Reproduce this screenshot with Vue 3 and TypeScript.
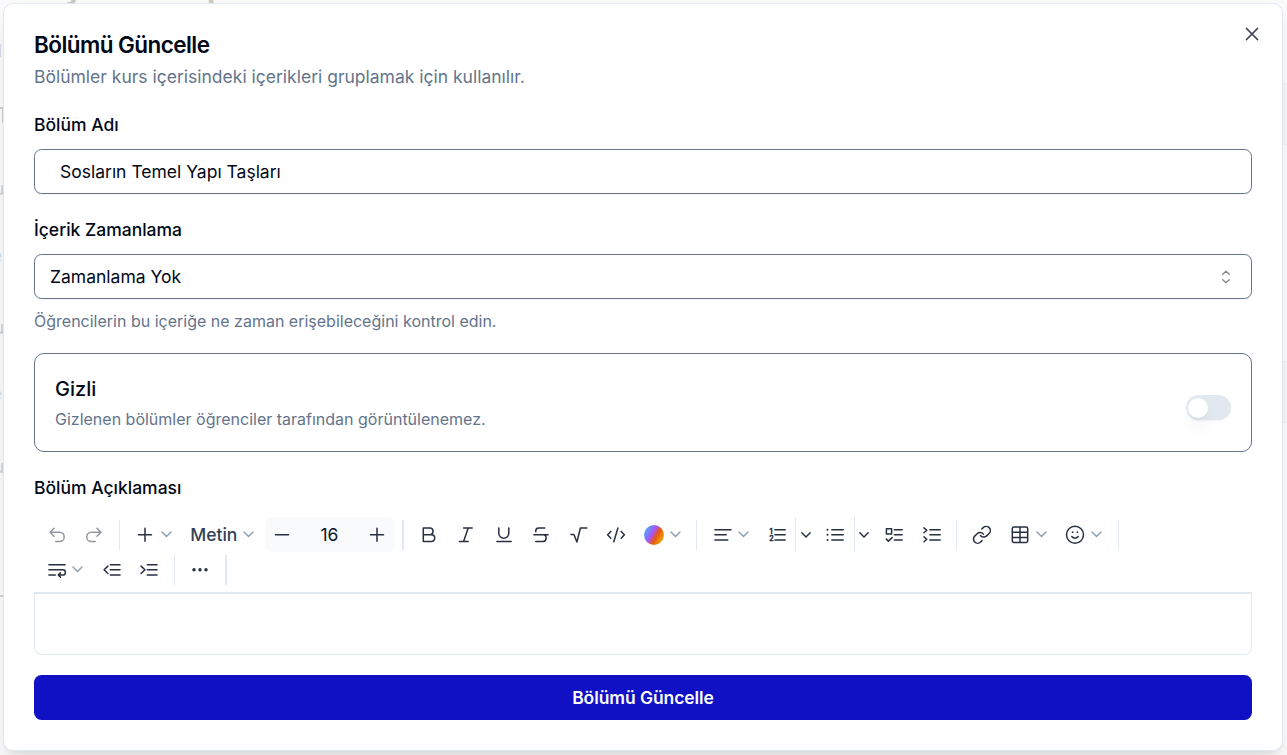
<script setup lang="ts">
import { ref } from 'vue'

type Kind = 'btn' | 'menu' | 'sep' | 'text' | 'size' | 'split' | 'color'
interface Item { kind: Kind; paths?: string; dim?: boolean; thick?: boolean; label?: string; art?: string }

const name = ref('Sosların Temel Yapı Taşları')
const hidden = ref(false)
const lines = 'M7.9 4.7H18.2M7.9 9.8H18.2M7.9 15H18.2'

const rowOne: Item[] = [
  { kind: 'btn', dim: true, paths: 'M7 3.3L3.1 7.3L7 11.3M3.3 7.3H12.6A4.6 4.6 0 0 1 12.6 16.5H8.8' },
  { kind: 'btn', dim: true, paths: 'M13 3.3L16.9 7.3L13 11.3M16.7 7.3H7.4A4.6 4.6 0 0 0 7.4 16.5H11.2' },
  { kind: 'sep' },
  { kind: 'menu', paths: 'M3.5 9.8H16.5M10 3.3V16.3' },
  { kind: 'text', label: 'Metin' },
  { kind: 'size' },
  { kind: 'sep', thick: true },
  { kind: 'btn', paths: 'M4.3 3H11.4A3.2 3.4 0 0 1 11.4 9.7H4.3ZM4.3 9.7H12.4A3.3 3.4 0 0 1 12.4 16.5H4.3Z' },
  { kind: 'btn', paths: 'M7.6 3H16.2M3.4 16.5H12.2M12.2 3L7.6 16.5' },
  { kind: 'btn', paths: 'M4.8 3V8.2A5 5 0 0 0 14.8 8.2V3M2.9 16.5H17.2' },
  { kind: 'btn', paths: 'M13.8 3H7.8Q4.8 3 4.8 5.6V6.8M2.9 9.8H17.1M12.6 9.8Q15 10.2 15 12.2V13.6Q15 16.5 12 16.5H4.8' },
  { kind: 'btn', paths: 'M2 9.5H4.9L7.9 17L11.4 3H17.8' },
  { kind: 'btn', paths: 'M4.8 6.4L1.6 9.8L4.8 13.2M15.2 6.4L18.4 9.8L15.2 13.2M11.9 3L7.8 16.7' },
  { kind: 'color' },
  { kind: 'sep' },
  { kind: 'menu', paths: 'M1.9 4.7H18M1.9 9.8H13.2M1.9 15H14.8' },
  { kind: 'split', art: 'ol', paths: lines },
  { kind: 'split', art: 'ul', paths: 'M6.8 4.7H18.2M6.8 9.8H18.2M6.8 15H18.2' },
  { kind: 'btn', paths: 'M2.4 3.7H7.6V8.9H2.4ZM2.3 14.1L4.4 16.1L8.1 12.6M10.3 4.7H18.2M10.3 9.8H18.2M10.3 15H18.2' },
  { kind: 'btn', paths: lines + 'M2 2.9L4.8 5.3L2 7.7M2 11.9L4.8 14.3L2 16.7' },
  { kind: 'sep' },
  { kind: 'btn', paths: 'M8.4 10.5A4.2 4.2 0 0 0 14.6 10.9L17.1 8.5A4.1 4.1 0 0 0 11.2 2.6L9.8 4M11.4 9.1A4.2 4.2 0 0 0 5.2 8.7L2.7 11.1A4.1 4.1 0 0 0 8.6 17L10 15.6' },
  { kind: 'menu', paths: 'M4 2.1H16Q17.7 2.1 17.7 3.8V15.8Q17.7 17.5 16 17.5H4Q2.3 17.5 2.3 15.8V3.8Q2.3 2.1 4 2.1ZM10 2.1V17.5M2.3 7.2H17.7M2.3 12.4H17.7' },
  { kind: 'menu', art: 'smile', paths: 'M6.8 11.6Q10 15 13.2 11.6' },
  { kind: 'sep' },
]

const rowTwo: Item[] = [
  { kind: 'menu', paths: 'M1.9 4.7H18.1M1.9 9.8H15.8A2.6 2.6 0 0 1 15.8 15H11.7M13.4 12.9L11.3 15L13.4 17.1M1.9 15H8.3' },
  { kind: 'btn', paths: 'M5.9 6.1L2.1 9.8L5.9 13.5M8.3 4.7H18M8.3 9.8H18M8.3 15H18' },
  { kind: 'btn', paths: 'M2.1 6.1L5.9 9.8L2.1 13.5M8.3 4.7H18M8.3 9.8H18M8.3 15H18' },
  { kind: 'sep' },
  { kind: 'btn', art: 'dots' },
  { kind: 'sep', thick: true },
]
const rows = [rowOne, rowTwo]
</script>

<template>
  <div class="page">
    <div class="behind">
      <span class="scrap top y">y</span>
      <span class="scrap top p">p</span>
      <i class="bit b1"></i><i class="bit b2"></i>
      <span class="scrap u1">u</span><span class="scrap u2">u</span><span class="scrap u3">u</span>
      <span class="scrap e1">e</span><span class="scrap e2">e</span>
      <i class="bit b3"></i>
      <i class="band r1"></i><i class="band r2"></i>
    </div>
    <section class="dialog">
      <svg class="close" viewBox="0 0 20 20"><path d="M4.4 4.4L15.6 15.6M15.6 4.4L4.4 15.6" /></svg>
      <h2>Bölümü Güncelle</h2>
      <p class="desc">Bölümler kurs içerisindeki içerikleri gruplamak için kullanılır.</p>

      <label class="label first">Bölüm Adı</label>
      <input v-model="name" class="field input" />

      <label class="label">İçerik Zamanlama</label>
      <div class="field select">
        <span>Zamanlama Yok</span>
        <svg viewBox="0 0 20 20"><path d="M6.7 7.3L10 4.2L13.3 7.3M6.7 12.7L10 15.8L13.3 12.7" /></svg>
      </div>
      <p class="hint">Öğrencilerin bu içeriğe ne zaman erişebileceğini kontrol edin.</p>

      <div class="option">
        <div>
          <div class="option-title">Gizli</div>
          <p class="option-hint">Gizlenen bölümler öğrenciler tarafından görüntülenemez.</p>
        </div>
        <button class="switch" :class="{ on: hidden }" @click="hidden = !hidden"><span></span></button>
      </div>

      <label class="label editor-label">Bölüm Açıklaması</label>
      <div class="toolbar">
        <div v-for="(row, r) in rows" :key="r" class="row">
          <div v-for="(it, i) in row" :key="i" :class="[it.kind, { dim: it.dim, thick: it.thick }]">
            <template v-if="it.kind === 'size'">
              <svg class="icon" viewBox="0 0 20 20"><path d="M3.5 9.8H16.5" /></svg>
              <span>16</span>
              <svg class="icon" viewBox="0 0 20 20"><path d="M3.5 9.8H16.5M10 3.3V16.3" /></svg>
            </template>
            <span v-else-if="it.kind === 'text'" class="txt">{{ it.label }}</span>
            <span v-else-if="it.kind === 'color'" class="swatch"></span>
            <span v-else-if="it.kind !== 'sep'" class="cell">
              <svg class="icon" viewBox="0 0 20 20">
                <path v-if="it.paths" :d="it.paths" />
                <g v-if="it.art === 'dots'" class="solid">
                  <circle cx="4" cy="9.8" r="1.7" /><circle cx="10" cy="9.8" r="1.7" /><circle cx="16" cy="9.8" r="1.7" />
                </g>
                <g v-if="it.art === 'ul'" class="solid">
                  <circle cx="2.5" cy="4.7" r="1" /><circle cx="2.5" cy="9.8" r="1" /><circle cx="2.5" cy="15" r="1" />
                </g>
                <g v-if="it.art === 'ol'" class="digits"><text x="2.4" y="9">1</text><text x="2.2" y="16.4">2</text></g>
                <g v-if="it.art === 'smile'">
                  <circle cx="10" cy="9.8" r="8.5" />
                  <g class="solid"><circle cx="7.6" cy="7.2" r=".9" /><circle cx="12.4" cy="7.2" r=".9" /></g>
                </g>
              </svg>
            </span>
            <svg v-if="['menu', 'text', 'color', 'split'].includes(it.kind)" class="chev" viewBox="0 0 15 15"><path d="M3 5L7.5 9.6L12 5" /></svg>
          </div>
        </div>
      </div>
      <div class="editor"></div>
      <button class="submit">Bölümü Güncelle</button>
    </section>
  </div>
</template>

<style>
body { margin: 0; overflow: hidden; }
</style>

<style scoped>
* { box-sizing: border-box; }
.page { position: relative; height: 755px; padding: 3px 4px 4px 3px; background: #fafafb; overflow: hidden; font-family: Inter, "Liberation Sans", sans-serif; color: #020817; }
.behind { position: absolute; inset: 0; overflow: hidden; }
.scrap { position: absolute; color: #cdced2; font-size: 17px; line-height: 20px; }
.top { top: -29px; font-size: 30px; line-height: 34px; font-weight: 700; color: #c8c8c8; }
.y { left: 65px; }
.p { left: 207px; }
.u1 { left: -6px; top: 179px; } .u2 { left: -6px; top: 318px; } .u3 { left: -6px; top: 457px; }
.e1 { left: -8px; top: 246px; color: #c9dcee; } .e2 { left: -8px; top: 384px; color: #c9dcee; }
.bit { position: absolute; }
.b1 { left: 0; top: 44px; width: 1px; height: 13px; background: #d5dceb; }
.b2 { left: 0; top: 107px; width: 3px; height: 16px; border: solid #cecece; border-width: 2px 1px 0 0; }
.b3 { left: 0; top: 595px; width: 3px; height: 2px; background: #ccd3d8; }
.band { position: absolute; right: 0; width: 5px; background: #f5f5f6; border: solid #edf0f4; border-width: 1px 0; }
.r1 { top: 83px; height: 62px; } .r2 { top: 361px; height: 62px; }
.dialog { position: relative; height: 748px; padding: 27px 30px 0; background: #fff; border: 1px solid #e2e8f0; border-radius: 10px; box-shadow: 0 12px 19px -4px rgba(0,0,0,.1), 0 5px 7px -5px rgba(0,0,0,.1); }
.close { position: absolute; right: 20px; top: 20px; width: 20px; height: 20px; }
svg { display: block; flex: none; fill: none; stroke: #475569; stroke-width: 1.5; stroke-linecap: round; stroke-linejoin: round; }
.close { stroke: #45475a; }
h2 { margin: 0; font-size: 22.5px; line-height: 28px; font-weight: 600; letter-spacing: -.56px; }
p { margin: 0; color: #64748b; }
.desc { margin-top: 5px; font-size: 17.5px; line-height: 25px; }
.label { display: block; margin-top: 23px; margin-bottom: 12px; font-size: 17.5px; line-height: 25px; font-weight: 500; }
.field { display: flex; align-items: center; width: 100%; height: 45px; border: 1px solid #64748b; border-radius: 7.5px; background: #fff; box-shadow: 0 1px 2px rgba(0,0,0,.05); font: 400 17.5px/25px Inter, "Liberation Sans", sans-serif; color: #020817; }
.input { padding: 0 25px; outline: 0; }
.select { justify-content: space-between; padding: 0 15px; }
.select svg { width: 20px; height: 20px; stroke: #81848b; stroke-width: 1.3; }
.hint { margin-top: 10px; font-size: 16px; line-height: 25px; }
.option { display: flex; justify-content: space-between; align-items: center; height: 99px; margin-top: 19px; padding: 8px 20px 0; border: 1px solid #64748b; border-radius: 10px; }
.option-title { margin-top: -7px; font-size: 20px; line-height: 28px; font-weight: 500; }
.option-hint { margin-top: 4px; font-size: 16px; line-height: 25px; }
.switch { width: 45px; height: 25px; margin-top: 2px; padding: 2px; border: 0; border-radius: 13px; background: #e2e8f0; box-shadow: 0 1px 2px rgba(0,0,0,.05); }
.switch span { display: block; width: 20px; height: 20px; border-radius: 50%; background: #fff; box-shadow: 0 12px 19px -4px rgba(0,0,0,.1), 0 5px 7px -5px rgba(0,0,0,.1); }
.switch.on span { margin-left: 21px; }
.editor-label { margin-bottom: 0; }
.toolbar { height: 92px; margin-top: 17px; padding-left: 3.75px; }
.row { display: flex; align-items: center; height: 35px; color: #334155; }
.row svg { stroke: #272f40; }
.icon { width: 20px; height: 20px; }
.btn { display: flex; justify-content: center; width: 37.5px; flex: none; }
.dim { opacity: .5; }
.row .chev { width: 15px; height: 15px; stroke: #94a3b8; }
.menu, .color { display: flex; align-items: center; gap: 3.5px; width: 55.25px; padding-left: 9px; flex: none; }
.text { display: flex; align-items: center; gap: 3.5px; width: 83.5px; padding-left: 9px; flex: none; font-size: 17.5px; font-weight: 500; }
.size { display: flex; align-items: center; justify-content: space-between; width: 130.25px; height: 35px; padding: 0 8px 0 7px; border-radius: 7.5px; background: #f8fafc; font-size: 17.5px; color: #0f172a; flex: none; }
.sep { width: 1px; height: 30px; margin: 0 6.25px 0 6px; background: #e2e8f0; flex: none; }
.thick { width: 2px; margin: 0 6.5px 0 6.5px; }
.swatch { width: 20px; height: 20px; border-radius: 50%; background: linear-gradient(120deg, #38bdf8 5%, #a855f7 42%, #ea580c 60%, #eab308 90%); }
.split { display: flex; align-items: center; width: 58.25px; height: 35px; flex: none; }
.split .cell { display: flex; align-items: center; justify-content: center; width: 37.5px; height: 35px; border-right: 1px solid #e2e8f0; }
.split .chev { width: 14px; height: 14px; margin-left: 2.5px; stroke: #272f40; }
.solid { fill: #272f40; stroke: none; }
.digits { fill: #272f40; stroke: #272f40; stroke-width: .3; font: 700 7px Inter, sans-serif; }
.editor { height: 63px; margin-top: -17px; border: 1px solid #e2e8f0; border-top-width: 2px; border-radius: 0 0 7.5px 7.5px; }
.submit { display: block; width: 100%; height: 45px; margin-top: 20px; border: 0; border-radius: 7.5px; background: #1010c4; color: #f8fafc; font: 600 17.5px/25px Inter, "Liberation Sans", sans-serif; letter-spacing: -.08px; }
</style>
